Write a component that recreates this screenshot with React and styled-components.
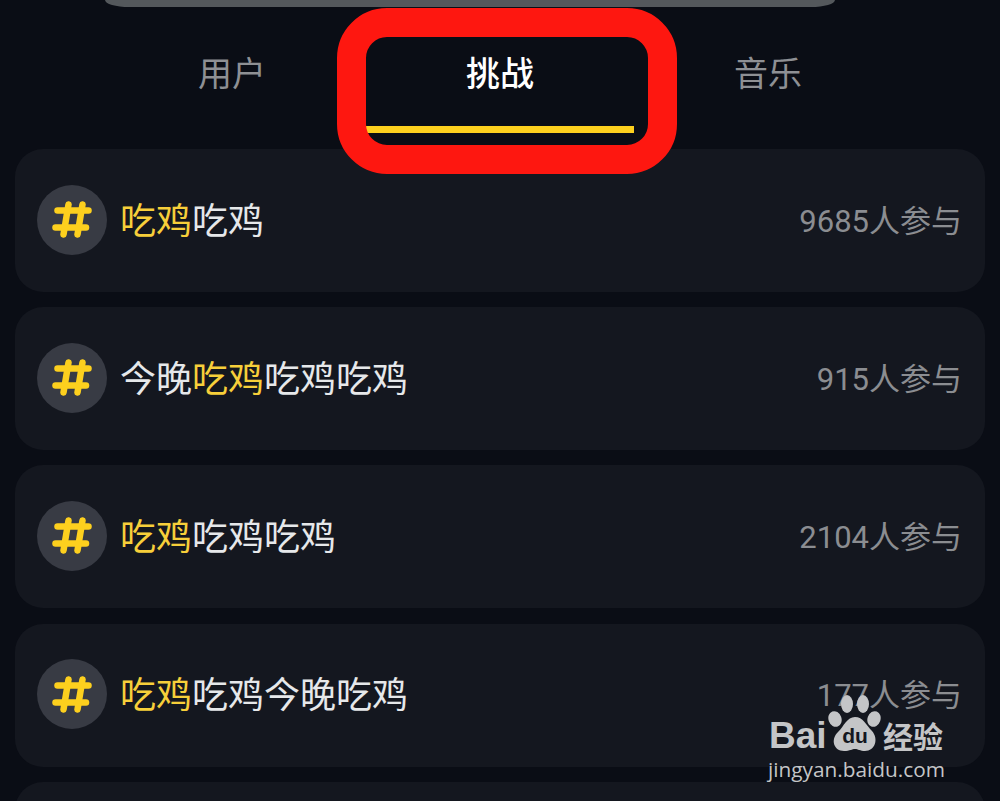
import styled, { createGlobalStyle } from "styled-components"

const GlobalStyle = createGlobalStyle`
  html, body {
    margin: 0;
    padding: 0;
    background-color: #0a0d15;
  }
`

const CJK = `Roboto, "Noto Sans CJK SC", sans-serif`

const Page = styled.main`
  position: relative;
  width: 1000px;
  height: 801px;
  overflow: hidden;
  background-color: #0a0d15;
  font-family: ${CJK};
`

const SearchEdge = styled.div`
  width: 730px;
  height: 7px;
  margin-left: 105px;
  background-color: #54585c;
  border-radius: 0 0 24px 24px / 0 0 7px 7px;
`

const Tabs = styled.nav`
  display: flex;
  justify-content: center;
  margin-bottom: 16px;
`

const Tab = styled.div`
  width: 268px;
  height: 126px;
  box-sizing: border-box;
  padding-top: 47px;
  text-align: center;
  font-size: 34px;
  line-height: 40px;
  font-weight: ${(props) => (props.$active ? 500 : 400)};
  color: ${(props) => (props.$active ? "#ffffff" : "#8e9094")};
  border-bottom: 7px solid ${(props) => (props.$active ? "#fdd01e" : "transparent")};
`

const Highlight = styled.div`
  position: absolute;
  left: 337px;
  top: 8px;
  width: 340px;
  height: 166px;
  box-sizing: border-box;
  border: 29px solid #fe1710;
  border-radius: 50px;
`

const List = styled.section`
  display: flex;
  flex-direction: column;
  gap: 15.2px;
  padding: 0 15px;
`

const Card = styled.article`
  flex: none;
  height: 143px;
  display: flex;
  align-items: center;
  padding: 0 23px 2px 22px;
  box-sizing: border-box;
  background-color: #14171f;
  border-radius: 28px;
`

const HashBadge = styled.div`
  flex: none;
  width: 70px;
  height: 70px;
  margin-right: 13px;
  display: flex;
  align-items: center;
  justify-content: center;
  border-radius: 50%;
  background-color: #383b44;
`

const Title = styled.span`
  flex: 1;
  padding-top: 4px;
  font-size: 36px;
  line-height: 44px;
  color: #e6e8ea;
`

const Keyword = styled.span`
  color: #f7cf3a;
`

const Count = styled.span`
  padding-top: 4px;
  font-size: 31px;
  line-height: 44px;
  color: #8b8d91;
`

const Watermark = styled.div`
  position: absolute;
  left: 768px;
  top: 695px;
  width: 180px;
  color: #c4c5c7;
`

const LogoRow = styled.div`
  display: flex;
  align-items: flex-end;
  height: 57px;
`

const LogoWord = styled.span`
  font-family: "Liberation Sans", sans-serif;
  font-weight: 700;
  font-size: 37px;
  line-height: 40px;
  width: 60px;
  padding-left: 1px;
  box-sizing: border-box;
  margin-bottom: -4px;
`

const LogoCjk = styled.span`
  font-family: "Noto Sans CJK SC", sans-serif;
  font-weight: 700;
  font-size: 30px;
  line-height: 36px;
  margin: 0 0 -1px 1px;
`

const Site = styled.div`
  margin-top: 4px;
  font-family: "Open Sans", sans-serif;
  font-size: 20.8px;
  line-height: 26px;
  white-space: nowrap;
`

function HashIcon() {
  return (
    <svg width="40" height="37" viewBox="0 0 40 37" fill="none" stroke="#fdd01e" strokeWidth="6.5" strokeLinecap="round">
      <path d="M5.500 9.500H36.500" />
      <path d="M3.500 26.500H34" />
      <path d="M16.500 3.500L11.500 33.500" />
      <path d="M30.500 3.500L25.500 33.500" />
    </svg>
  )
}

function PawLogo() {
  return (
    <svg width="54" height="57" viewBox="0 0 54 57" fill="#c4c5c7">
      <ellipse cx="7" cy="24" rx="6.500" ry="8" transform="rotate(-20 7 24)" />
      <ellipse cx="19" cy="9" rx="6" ry="9" />
      <ellipse cx="35" cy="9" rx="6" ry="9" />
      <ellipse cx="46" cy="24" rx="6.500" ry="8" transform="rotate(20 46 24)" />
      <path d="M27 22C35 22 38 30 44 36C51 44 47 56 37 56C32 56 30 54 27 54C24 54 22 56 16 56C6 56 2 45 10 37C16 31 19 22 27 22Z" />
      <text x="27" y="48" textAnchor="middle" fontFamily="Liberation Sans, sans-serif" fontSize="21" fontWeight="700" fill="#14171f">du</text>
    </svg>
  )
}

const challenges = [
  { before: "", keyword: "吃鸡", after: "吃鸡", count: "9685人参与" },
  { before: "今晚", keyword: "吃鸡", after: "吃鸡吃鸡", count: "915人参与" },
  { before: "", keyword: "吃鸡", after: "吃鸡吃鸡", count: "2104人参与" },
  { before: "", keyword: "吃鸡", after: "吃鸡今晚吃鸡", count: "177人参与" },
  { before: "", keyword: "", after: "", count: "" },
]

export default function App() {
  return (
    <Page>
      <GlobalStyle />
      <SearchEdge />

      <Tabs>
        <Tab>用户</Tab>
        <Tab $active>挑战</Tab>
        <Tab>音乐</Tab>
      </Tabs>

      <List>
        {challenges.map((item, index) => (
          <Card key={index}>
            <HashBadge>
              <HashIcon />
            </HashBadge>
            <Title>
              {item.before}
              <Keyword>{item.keyword}</Keyword>
              {item.after}
            </Title>
            <Count>{item.count}</Count>
          </Card>
        ))}
      </List>

      <Highlight />

      <Watermark>
        <LogoRow>
          <LogoWord>Bai</LogoWord>
          <PawLogo />
          <LogoCjk>经验</LogoCjk>
        </LogoRow>
        <Site>jingyan.baidu.com</Site>
      </Watermark>
    </Page>
  )
}
